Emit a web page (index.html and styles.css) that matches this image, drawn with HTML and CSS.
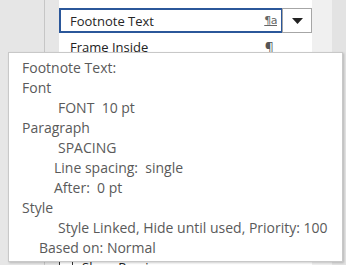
FILE: index.html
```html
<!DOCTYPE html>
<html>
<head>
<meta charset="utf-8">
<link rel="stylesheet" href="styles.css">
</head>
<body>
<div class="app">
  <div class="gutter"></div>
  <div class="divider"></div>
  <div class="gap"></div>
  <div class="panel">
    <div class="combo-row">
      <div class="combo">
        <span class="combo-text">Footnote Text</span>
        <span class="para-a">¶a</span>
      </div>
      <div class="drop-btn">
        <svg width="11" height="6" viewBox="0 0 11 6"><path d="M0 0H11L5.5 6Z" fill="#222"/></svg>
      </div>
    </div>
    <div class="list-item">
      <span>Frame Inside</span>
      <span class="pilcrow">¶</span>
    </div>
    <div class="spacer"></div>
    <div class="preview-row">
      <span class="checkbox"></span>
      <span class="preview-text">Show Preview</span>
    </div>
  </div>
  <div class="scroll"></div>
  <div class="edge"></div>
</div>
<div class="tooltip">
  <div class="line">Footnote Text:</div>
  <div class="line">Font</div>
  <div class="line ind2">FONT&nbsp;&nbsp;10 pt</div>
  <div class="line">Paragraph</div>
  <div class="line ind2">SPACING</div>
  <div class="line ind1">Line spacing:&nbsp;&nbsp;single</div>
  <div class="line ind1">After:&nbsp;&nbsp;0 pt</div>
  <div class="line">Style</div>
  <div class="line ind2">Style Linked, Hide until used, Priority: 100</div>
  <div class="line ind3">Based on: Normal</div>
</div>
</body>
</html>
```
FILE: styles.css
```css
html, body {
  margin: 0;
  padding: 0;
}
body {
  width: 346px;
  height: 265px;
  overflow: hidden;
  background: #e6e6e6;
  font-family: "Open Sans", "Noto Sans", sans-serif;
  position: relative;
}
.app {
  display: flex;
  height: 265px;
}
.gutter {
  width: 44px;
  background: #e6e6e6;
}
.divider {
  width: 1px;
  background: #c6c6c6;
}
.gap {
  width: 14px;
  background: #e6e6e6;
}
.panel {
  width: 253px;
  background: #fff;
  display: flex;
  flex-direction: column;
  padding-top: 8px;
  box-sizing: border-box;
}
.combo-row {
  display: flex;
  height: 25px;
}
.combo {
  width: 224px;
  box-sizing: border-box;
  border: 2px solid #2b579a;
  display: flex;
  align-items: center;
  justify-content: space-between;
  padding: 0 4px 0 9px;
  font-size: 13px;
  color: #262626;
}
.para-a {
  font-family: "DejaVu Sans", sans-serif;
  font-size: 11px;
  color: #666;
  text-decoration: underline;
  letter-spacing: -0.5px;
}
.drop-btn {
  width: 30px;
  margin-left: -1px;
  box-sizing: border-box;
  border: 1px solid #a6a6a6;
  display: flex;
  align-items: center;
  justify-content: center;
  background: #fff;
}
.list-item {
  display: flex;
  justify-content: space-between;
  padding: 5px 38px 0 11px;
  font-size: 13px;
  color: #222;
  height: 19px;
}
.pilcrow {
  color: #555;
  font-size: 14px;
}
.spacer {
  flex: 1;
}
.preview-row {
  display: flex;
  align-items: center;
  gap: 9px;
  height: 16px;
  margin-bottom: -10px;
  font-size: 13px;
  color: #222;
}
.checkbox {
  width: 12px;
  height: 12px;
  border: 1px solid #333;
}
.scroll {
  width: 20px;
  background: #f0f0f0;
}
.edge {
  flex: 1;
  background: #e3e3e3;
}
.tooltip {
  position: absolute;
  left: 8px;
  top: 52px;
  width: 335px;
  height: 210px;
  box-sizing: border-box;
  background: #fff;
  border: 1px solid #c8c8c8;
  box-shadow: 1px 1px 2px rgba(0,0,0,0.2);
  padding: 5px 0 0 13px;
  color: #5a5a5a;
  font-size: 14px;
}
.line {
  height: 20px;
  line-height: 20px;
  white-space: nowrap;
}
.ind1 { padding-left: 32px; }
.ind2 { padding-left: 36px; }
.ind3 { padding-left: 17px; }
```
